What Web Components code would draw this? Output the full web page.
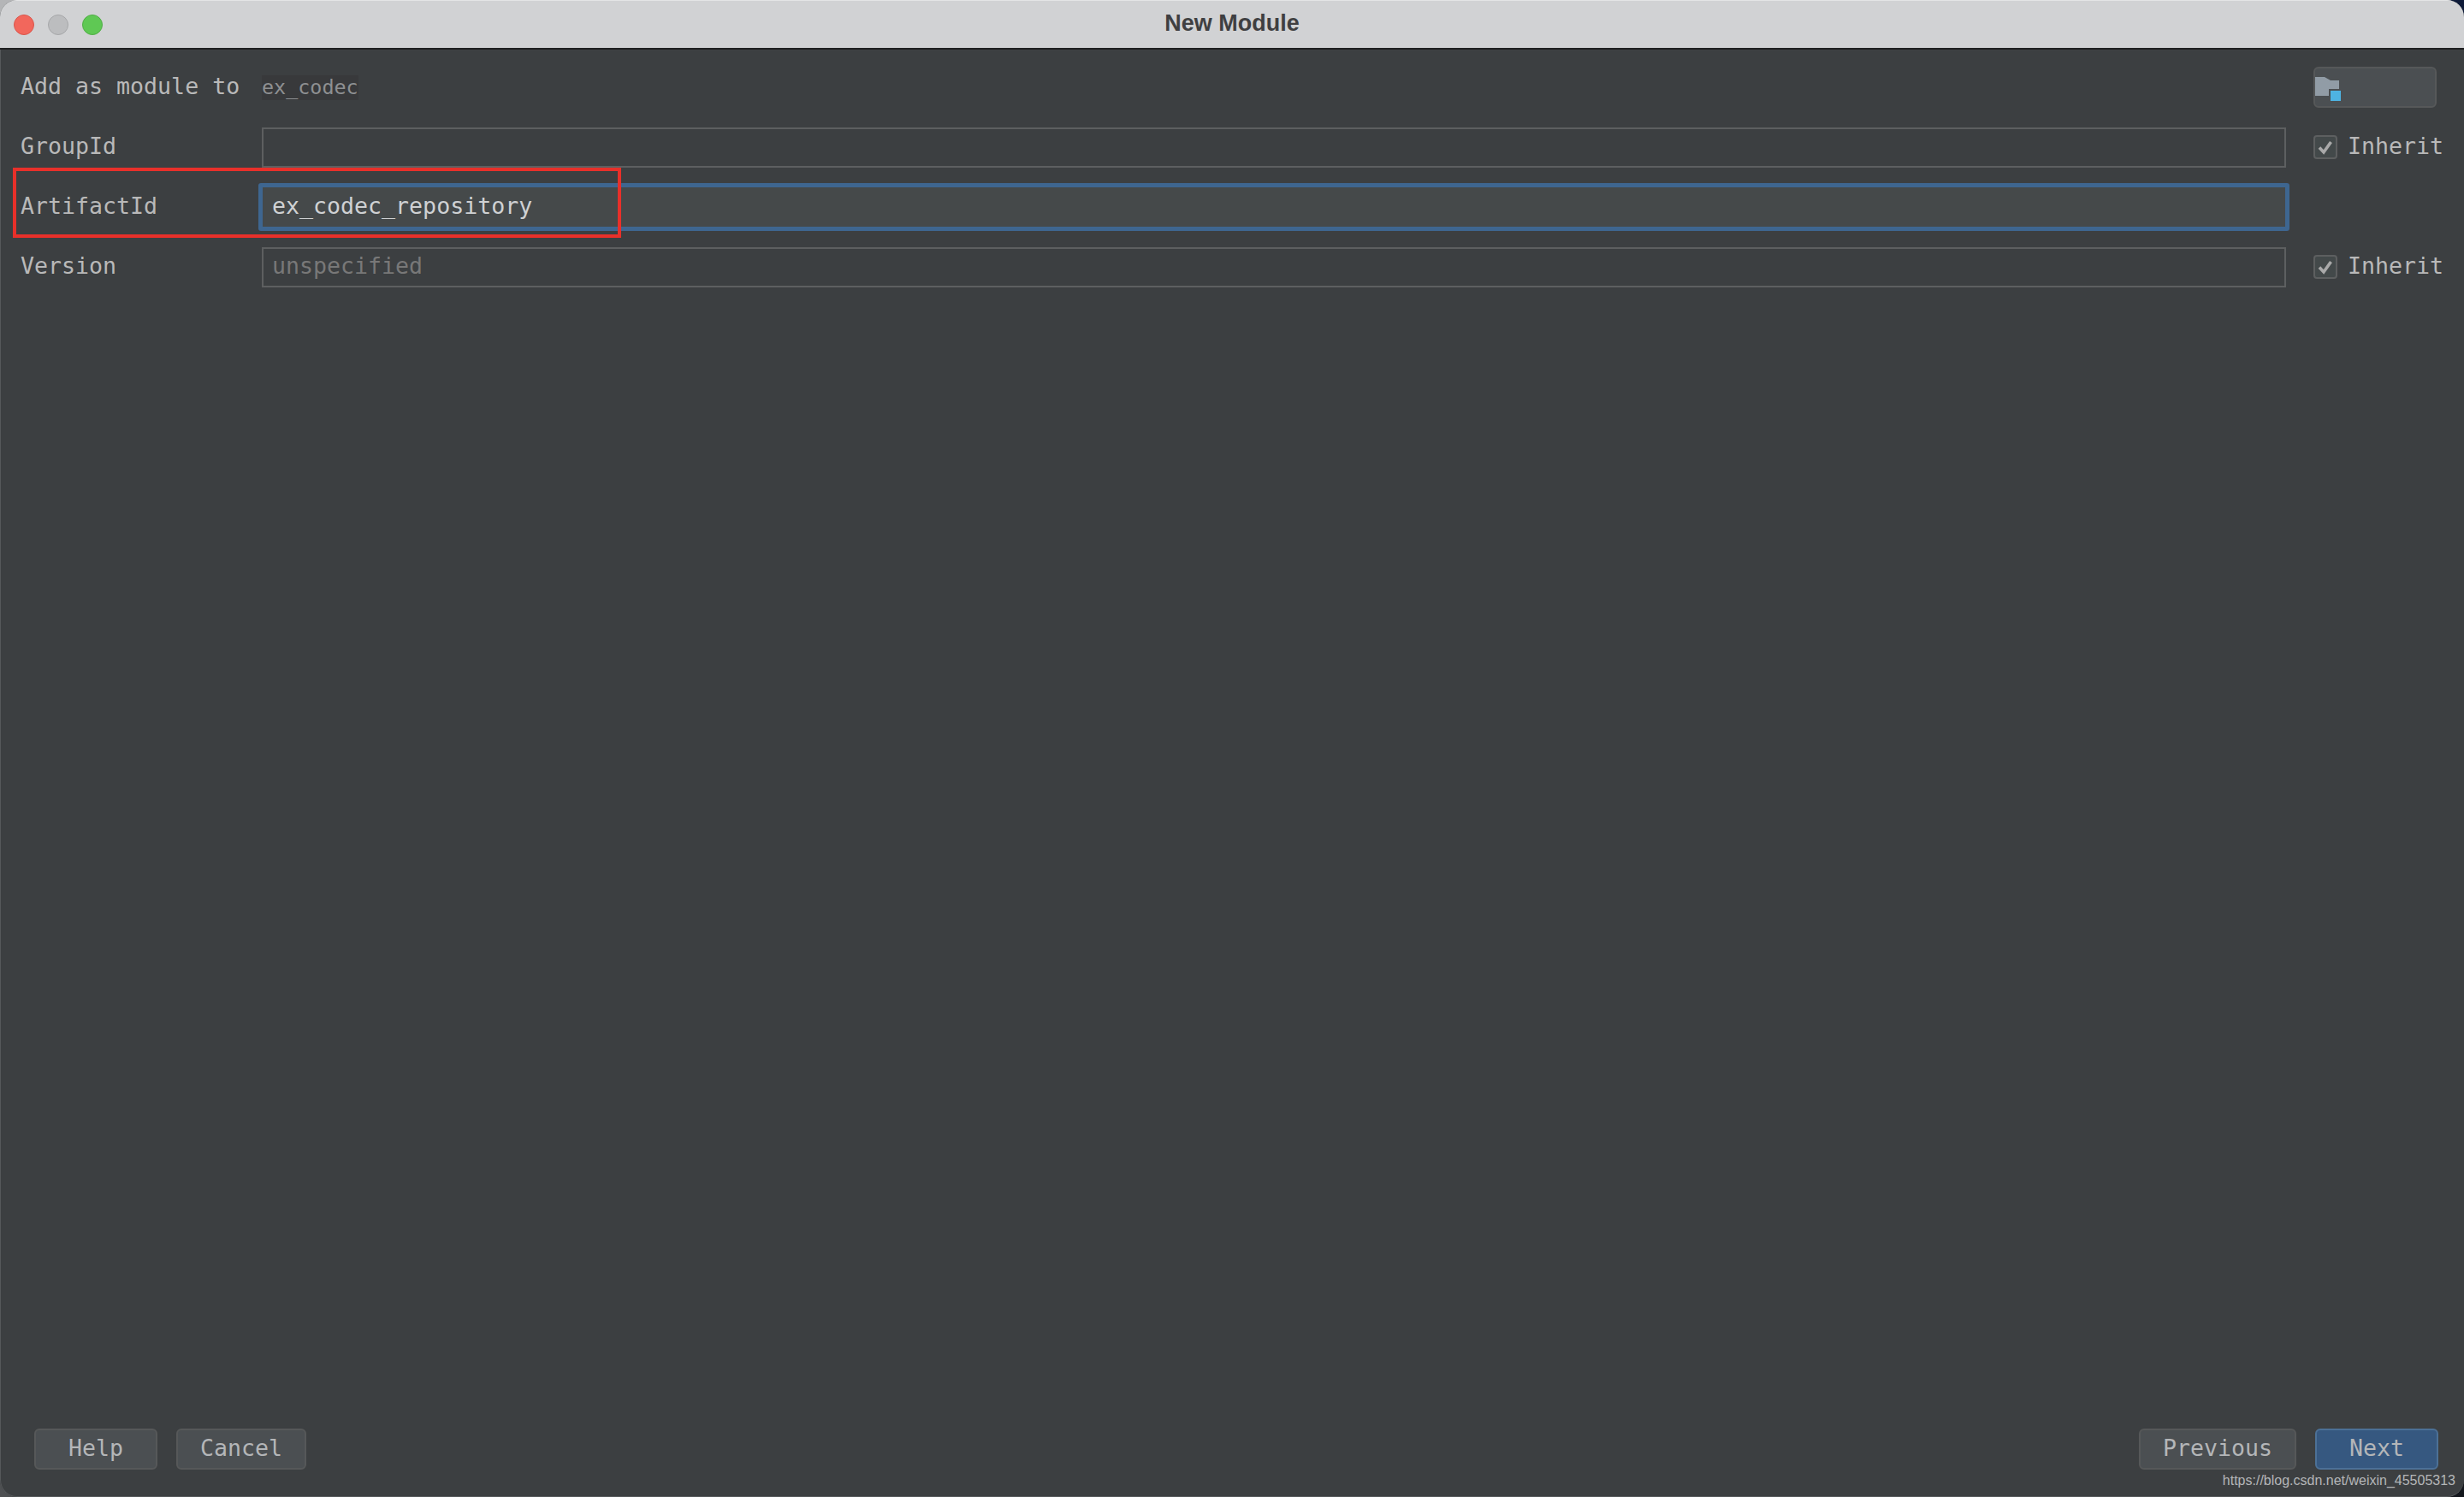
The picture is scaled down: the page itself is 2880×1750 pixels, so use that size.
<!DOCTYPE html>
<html>
<head>
<meta charset="utf-8">
<title>New Module</title>
<style>
  html, body { margin: 0; height: 100%; }
  body {
    font-family: "DejaVu Sans Mono", monospace;
    /* what shows behind the window's rounded corners */
    background:
      linear-gradient(#b4b5b7, #b4b5b7) 0 0 / 30px 30px no-repeat,
      linear-gradient(#0d1a38, #0d1a38) 100% 0 / 30px 30px no-repeat,
      linear-gradient(#4e5052, #4e5052) 0 100% / 30px 30px no-repeat,
      linear-gradient(#14171d, #14171d) 100% 100% / 30px 30px no-repeat;
  }
</style>
</head>
<body>
<module-window heading="New Module">
  <form-row label="Add as module to" kind="parent">
    <span>ex_codec</span>
    <folder-button slot="aside"></folder-button>
  </form-row>
  <form-row label="GroupId">
    <text-field></text-field>
    <inherit-check slot="aside">Inherit</inherit-check>
  </form-row>
  <form-row label="ArtifactId">
    <text-field focused value="ex_codec_repository"></text-field>
  </form-row>
  <form-row label="Version">
    <text-field placeholder="unspecified"></text-field>
    <inherit-check slot="aside">Inherit</inherit-check>
  </form-row>

  <dialog-button slot="left" style="width:144px">Help</dialog-button>
  <dialog-button slot="left" style="width:152px">Cancel</dialog-button>
  <dialog-button slot="right" style="width:184px">Previous</dialog-button>
  <dialog-button slot="right" primary style="width:144px">Next</dialog-button>
</module-window>

<script>
class ModuleWindow extends HTMLElement {
  constructor() {
    super();
    this.attachShadow({ mode: 'open' });
  }

  connectedCallback() {
    this.shadowRoot.innerHTML = `
      <style>
        :host {
          display: flex;
          flex-direction: column;
          position: relative;
          width: 2880px;
          height: 1750px;
          box-sizing: border-box;
          overflow: hidden;
          border-radius: 20px;
          background: #3c3f41;
          color: #bbbbbb;
        }
        header {
          flex: none;
          display: flex;
          align-items: center;
          position: relative;
          height: 58px;
          padding-left: 16px;
          gap: 16px;
          box-sizing: border-box;
          border-top: 1px solid #e4e5e6;
          border-bottom: 2px solid #1f2021;
          background: #d1d2d4;
        }
        .light {
          width: 24px;
          height: 24px;
          border-radius: 50%;
          box-sizing: border-box;
        }
        .close { background: #f2675c; border: 1px solid #d9564c; }
        .idle { background: #bcbdbf; border: 1px solid #a6a7a9; }
        .zoom { background: #5fc854; border: 1px solid #50ad46; }
        h1 {
          position: absolute;
          left: 0;
          right: 0;
          margin: 0;
          padding-bottom: 2px;
          text-align: center;
          font: bold 27px "Liberation Sans", sans-serif;
          color: #3f3f41;
        }
        main {
          flex: 1;
          display: flex;
          flex-direction: column;
          padding: 20px 24px 0 24px;
        }
        footer {
          flex: none;
          display: flex;
          justify-content: space-between;
          padding: 0 30px 32px 40px;
        }
        .group { display: flex; gap: 22px; }
        /* annotation drawn over the ArtifactId row */
        .mark {
          position: absolute;
          left: 15px;
          top: 196px;
          width: 711px;
          height: 82px;
          box-sizing: border-box;
          border: 4px solid #e8302a;
        }
        .edge {
          position: absolute;
          left: 0;
          right: 0;
          top: 58px;
          bottom: 0;
          border-radius: 0 0 20px 20px;
          box-shadow: inset 1px 0 0 #55585a, inset 0 -1px 0 #55585a;
        }
        .stamp {
          position: absolute;
          right: 10px;
          bottom: 10px;
          font: 16px "Liberation Sans", sans-serif;
          color: #b4b6b8;
        }
      </style>
      <header>
        <span class="light close"></span>
        <span class="light idle"></span>
        <span class="light zoom"></span>
        <h1>${this.getAttribute('heading')}</h1>
      </header>
      <main><slot></slot></main>
      <footer>
        <div class="group"><slot name="left"></slot></div>
        <div class="group"><slot name="right"></slot></div>
      </footer>
      <div class="edge"></div>
      <div class="mark"></div>
      <span class="stamp">https://blog.csdn.net/weixin_45505313</span>
    `;
  }
}

class FormRow extends HTMLElement {
  constructor() {
    super();
    this.attachShadow({ mode: 'open' });
  }

  connectedCallback() {
    this.shadowRoot.innerHTML = `
      <style>
        :host {
          display: grid;
          grid-template-columns: 282px 2366px 200px;
          align-items: center;
          height: 70px;
          font: 26.6px "DejaVu Sans Mono", monospace;
          color: #b9b9b9;
        }
        :host([kind="parent"]) { height: 48px; margin-bottom: 11px; }
        ::slotted(span) {
          display: block;
          line-height: 29px;
          font-size: 23.4px;
          color: #8e9092;
          background: #38393b;
        }
        .label { padding-bottom: 4px; white-space: nowrap; }
        .value { display: flex; }
        .aside { display: flex; padding-left: 32px; }
      </style>
      <div class="label">${this.getAttribute('label')}</div>
      <div class="value"><slot></slot></div>
      <div class="aside"><slot name="aside"></slot></div>
    `;
  }
}

class TextField extends HTMLElement {
  constructor() {
    super();
    this.attachShadow({ mode: 'open' });
  }

  connectedCallback() {
    const value = this.getAttribute('value') || '';
    const placeholder = this.getAttribute('placeholder') || '';
    this.shadowRoot.innerHTML = `
      <style>
        :host {
          display: flex;
          align-items: center;
          flex: 1;
          height: 47px;
          box-sizing: border-box;
          padding: 0 10px 3px;
          border: 2px solid #5d5f60;
          background: #3c3f41;
          font: 26.6px "DejaVu Sans Mono", monospace;
          color: #bbbbbb;
        }
        :host([focused]) {
          height: 56px;
          margin: 0 -4px 0 -4px;
          border: 5px solid #3e6690;
          border-radius: 3px;
          padding: 0 11px 3px;
          background: #45494a;
          color: #cfd1d3;
        }
        .hint { color: #787878; }
      </style>
      ${value ? `<span>${value}</span>` : `<span class="hint">${placeholder}</span>`}
    `;
  }
}

class InheritCheck extends HTMLElement {
  constructor() {
    super();
    this.attachShadow({ mode: 'open' });
    this.shadowRoot.innerHTML = `
      <style>
        :host {
          display: inline-flex;
          align-items: center;
          gap: 12px;
          white-space: nowrap;
        }
        .box {
          width: 28px;
          height: 28px;
          box-sizing: border-box;
          border: 2px solid #5d5f60;
          border-radius: 4px;
          background: #43494a;
          display: flex;
        }
        .text { padding-bottom: 3px; }
        svg { width: 24px; height: 24px; }
      </style>
      <span class="box">
        <svg viewBox="0 0 24 24"><path d="M5 12.5 L10 18 L18.5 6" fill="none" stroke="#a9a9a9" stroke-width="3.6"/></svg>
      </span>
      <span class="text"><slot></slot></span>
    `;
  }
}

class FolderButton extends HTMLElement {
  constructor() {
    super();
    this.attachShadow({ mode: 'open' });
    this.shadowRoot.innerHTML = `
      <style>
        :host {
          display: flex;
          align-items: center;
          width: 144px;
          height: 48px;
          box-sizing: border-box;
          border: 2px solid #565859;
          border-radius: 6px;
          background: #4b4f52;
        }
        svg { width: 30px; height: 28px; margin-top: 4px; display: block; }
      </style>
      <svg viewBox="0 0 30 28">
        <path d="M0 0 H11 L18 4 H28 V22 H0 Z" fill="#919ca6"/>
        <rect x="16" y="14" width="14" height="14" fill="#4b4f52"/>
        <rect x="18" y="16" width="12" height="12" fill="#4eb3e2"/>
      </svg>
    `;
  }
}

class DialogButton extends HTMLElement {
  constructor() {
    super();
    this.attachShadow({ mode: 'open' });
    this.shadowRoot.innerHTML = `
      <style>
        :host {
          display: flex;
          align-items: center;
          justify-content: center;
          height: 48px;
          box-sizing: border-box;
          padding-bottom: 3px;
          border: 2px solid #565859;
          border-radius: 6px;
          background: #4b4f52;
          font: 26.6px "DejaVu Sans Mono", monospace;
          color: #b4b6b8;
        }
        :host([primary]) {
          background: #365880;
          border-color: #4c7096;
        }
      </style>
      <slot></slot>
    `;
  }
}

customElements.define('module-window', ModuleWindow);
customElements.define('form-row', FormRow);
customElements.define('text-field', TextField);
customElements.define('inherit-check', InheritCheck);
customElements.define('folder-button', FolderButton);
customElements.define('dialog-button', DialogButton);
</script>
</body>
</html>
